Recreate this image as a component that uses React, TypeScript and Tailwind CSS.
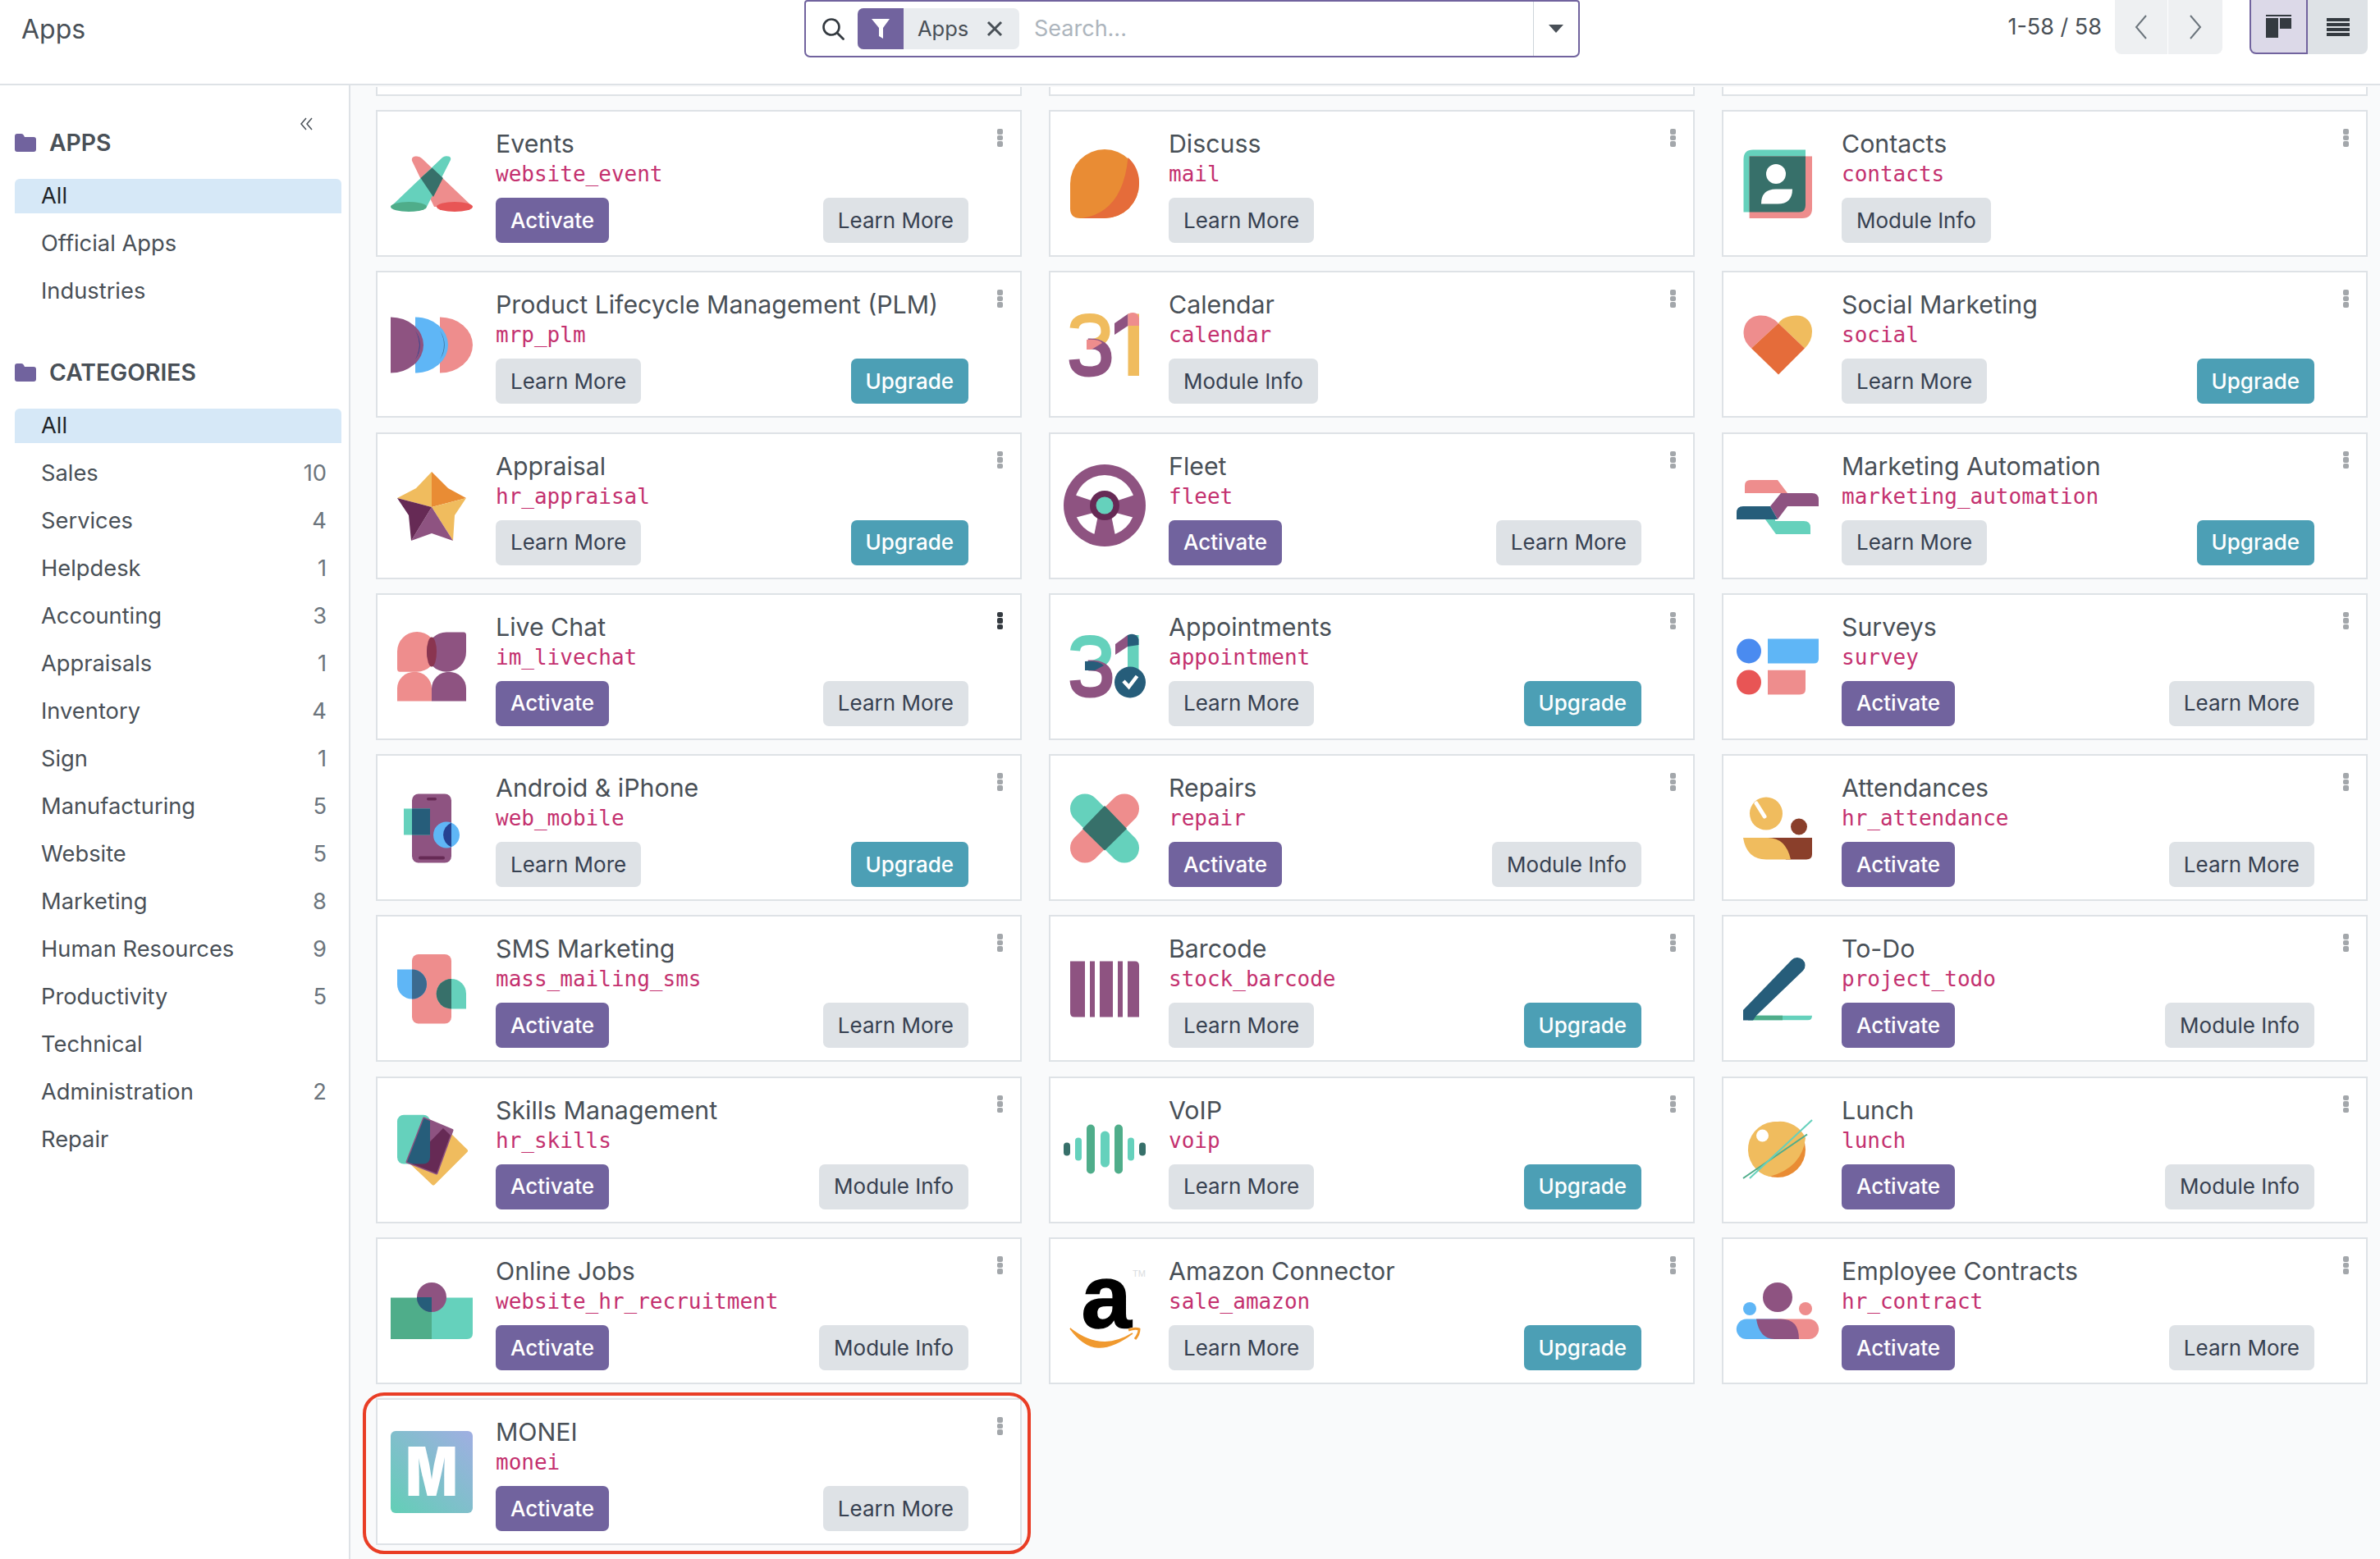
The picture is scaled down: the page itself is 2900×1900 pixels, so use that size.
import React from "react";

const T = "#65d1bc", S = "#ee8d8d", R = "#e85555", P = "#8e5381", DP = "#662a55", B = "#5fb6f6", DB = "#254291", N = "#265d7a", O = "#e98c34", OR = "#e56c3a", Y = "#f0bc5e", G = "#4fad8a", DT = "#37706a", BR = "#8a3f2b";

const Svg = ({ children }: { children: React.ReactNode }) => (
  <svg viewBox="0 0 100 100" className="w-[100px] h-[100px] shrink-0 overflow-visible">{children}</svg>
);

const icons: Record<string, React.ReactNode> = {
  events: (
    <Svg>
      <path d="M26 22 Q25 17 30 16.5 Q35 16 38 19 L100 78 L53 78 Z" fill={S} />
      <path d="M63 18 Q66 15.5 70 16.5 Q74 17 73 21 L44 78 L0 78 Z" fill={T} />
      <polygon points="50.5,30.5 63.8,43 52,66 36.5,43" fill={DT} />
      <ellipse cx="22" cy="78" rx="22" ry="6" fill={G} />
      <ellipse cx="78" cy="78" rx="22" ry="6" fill={R} />
    </Svg>
  ),
  discuss: (
    <Svg>
      <path d="M8 50 A42 42 0 1 1 92 50 A42 42 0 0 1 50 92 H20 Q8 92 8 80 Z" fill={O} />
      <path d="M78.5 18 A42 42 0 0 1 92 50 A42 42 0 0 1 50 92 H22 Q72 85 78.5 18 Z" fill={OR} />
    </Svg>
  ),
  contacts: (
    <Svg>
      <path d="M8.5 84.5 V20 Q8.5 8.5 20 8.5 H84 V84.5 Z" fill={T} />
      <path d="M15.6 16.5 H92 V80 Q92 92 80 92 H15.6 Z" fill={S} />
      <path d="M15.6 16.5 H84 V76 Q84 84.5 76 84.5 H15.6 Z" fill={DT} />
      <circle cx="48" cy="38" r="12" fill="#fff" />
      <path d="M30 74.5 Q30 56.5 48 56.5 H68 Q68 74.5 50 74.5 Z" fill="#fff" />
    </Svg>
  ),
  plm: (
    <Svg>
      <path d="M60 16.5 A40 34 0 0 1 60 84.5 Z" fill={S} />
      <path d="M30 16.5 A40 34 0 0 1 30 84.5 Z" fill={B} />
      <path d="M0 16.5 A40 34 0 0 1 0 84.5 Z" fill={P} />
      <path d="M60 33 A40 34 0 0 1 60 68 Q70 50 60 33 Z" fill="#3b6a8f" />
      <path d="M30 33 A40 34 0 0 1 30 68 Q40 50 30 33 Z" fill={DB} />
    </Svg>
  ),
  calendar: (
    <Svg>
      <path d="M13 30 Q14 17.5 32 17.5 Q51 17.5 51 34 Q51 47 32 49" fill="none" stroke={Y} strokeWidth="11" />
      <path d="M30 49 Q52 48 52 66 Q52 83 31 83 Q14 83 13 68" fill="none" stroke={P} strokeWidth="13" />
      <path d="M28 44 Q43 43 47 48 L34 56 H28 Z" fill={S} />
      <rect x="78.5" y="12.5" width="13.5" height="75.5" fill={Y} />
      <polygon points="62,24 78.5,12.5 78.5,27 62,38" fill={P} />
      <path d="M78.5 12.5 Q90 8 92 18 V27 L78.5 27 Z" fill={S} />
    </Svg>
  ),
  social: (
    <Svg>
      <path d="M51 24 Q42 14.5 30 14.5 C15 14.5 8.5 25 8.5 36 Q8.5 46 18 54.5 Z" fill={S} />
      <path d="M51 24 L83 54.5 Q92 46 92 34 C92 22 84 14.5 73 14.5 C63 14.5 55 18 51 24 Z" fill={Y} />
      <polygon points="51,24 83,54.5 51,86.5 18,54.5" fill={OR} />
    </Svg>
  ),
  appraisal: (
    <Svg>
      <polygon points="50,9 31,29 8,41 50,52" fill={Y} />
      <polygon points="50,9 70,29 92,41 50,52" fill={O} />
      <polygon points="92,41 50,52 76,93 78,62" fill={Y} />
      <polygon points="50,52 76,93 50,84 25,93" fill={P} />
      <polygon points="8,41 50,52 25,93 22,62" fill={DP} />
    </Svg>
  ),
  fleet: (
    <Svg>
      <circle cx="50" cy="50" r="50" fill={P} />
      <circle cx="50" cy="50" r="37" fill="#fff" />
      <polygon points="10,36 40,46 40,58 10,66" fill={P} />
      <polygon points="90,36 60,46 60,58 90,66" fill={P} />
      <polygon points="42,62 58,62 64,92 36,92" fill={P} />
      <circle cx="50" cy="50" r="18" fill={DP} />
      <circle cx="50" cy="50" r="10.5" fill={T} />
    </Svg>
  ),
  automation: (
    <Svg>
      <path d="M10 35 V26 Q10 19 17 19 H50 L62 35 Z" fill={S} />
      <path d="M35 67 H47 V69 H82 Q90 69 90 77 V85 H48 Z" fill={T} />
      <path d="M54 35 H92 Q100 35 100 43 V51 H62 L50 67 L41 51 Z" fill={P} />
      <path d="M0 67 V59 Q0 51 8 51 H41 L50 67 Z" fill={N} />
    </Svg>
  ),
  livechat: (
    <Svg>
      <path d="M8 32 A24 24 0 0 1 56 32 A24 24 0 0 1 32 56.7 H11 Q8 56.7 8 53 Z" fill={S} />
      <path d="M44 32 A24 24 0 0 1 68 8.5 H89 Q92 8.5 92 12 V32 A24 24 0 0 1 68 56.7 A24 24 0 0 1 44 32 Z" fill={P} />
      <ellipse cx="50" cy="32.5" rx="6" ry="18" fill="#8a3550" />
      <path d="M8 92.5 V77 A21 20.3 0 0 1 50 77 V92.5 Z" fill={S} />
      <path d="M50 92.5 V77 A21 20.3 0 0 1 92 77 V92.5 Z" fill={P} />
    </Svg>
  ),
  appointment: (
    <Svg>
      <path d="M14 31 Q15 18 32 18 Q52 18 52 34 Q52 46 33 49" fill="none" stroke={T} strokeWidth="12" />
      <path d="M30 49 Q53 48 53 64 Q53 82 32 82 Q15 82 14 67" fill="none" stroke={P} strokeWidth="13" />
      <path d="M26 44 Q43 43 49 49 L38 55 H26 Z" fill={N} />
      <rect x="78" y="12" width="13.5" height="50" fill={T} />
      <polygon points="63,23 78,12 78,26 63,36" fill={P} />
      <path d="M78 12 Q88 8 91.5 17 V24 L78 26 Z" fill={N} />
      <circle cx="81" cy="69.5" r="19" fill={N} />
      <path d="M73 68 L79.5 75 L89.5 62" fill="none" stroke="#fff" strokeWidth="4.5" />
    </Svg>
  ),
  repair: (
    <Svg>
      <line x1="26" y1="26.5" x2="74" y2="74.5" stroke={T} strokeWidth="36" strokeLinecap="round" />
      <line x1="74" y1="26.5" x2="26" y2="74.5" stroke={S} strokeWidth="36" strokeLinecap="round" />
      <polygon points="50,23 77,51 50,77.5 23,51" fill={DT} />
    </Svg>
  ),
  android: (
    <Svg>
      <rect x="26" y="8.5" width="48" height="84" rx="8" fill={P} />
      <rect x="44" y="13" width="12" height="3.5" rx="1.7" fill={DP} />
      <rect x="34" y="84.5" width="32" height="4" rx="2" fill={DP} />
      <rect x="16" y="26.5" width="32" height="32" fill={T} />
      <rect x="26" y="26.5" width="22" height="32" fill={N} />
      <circle cx="68" cy="58.5" r="16" fill={B} />
      <path d="M74 43.7 V73.3 A16 16 0 0 1 74 43.7 Z" fill={DB} />
    </Svg>
  ),
  survey: (
    <Svg>
      <circle cx="15" cy="31.5" r="15" fill="#4a8bf0" />
      <circle cx="15" cy="69.6" r="15" fill={R} />
      <path d="M38 16.5 H100 V41 Q100 46.5 94 46.5 H38 Z" fill={B} />
      <path d="M38 54.7 H84 V78 Q84 84.5 77 84.5 H38 Z" fill={S} />
    </Svg>
  ),
  attendance: (
    <Svg>
      <circle cx="36" cy="32.5" r="20" fill={Y} />
      <line x1="24" y1="20" x2="34" y2="36" stroke="#fff" strokeWidth="5" strokeLinecap="round" />
      <circle cx="76" cy="48.5" r="10" fill={BR} />
      <path d="M38 62 H92 V82 Q92 88.5 85 88.5 H60 Z" fill={BR} />
      <path d="M8 62 H38 Q60 62 66 88.5 H36 Q12 88 8 62 Z" fill={Y} />
    </Svg>
  ),
  sms: (
    <Svg>
      <rect x="26" y="8" width="48" height="84.5" rx="8" fill={S} />
      <path d="M8 26.5 H26 A18 18 0 0 1 26 62.5 A18 18 0 0 1 8 44.5 Z" fill={B} />
      <path d="M26 26.5 A18 18 0 0 1 26 62.5 Z" fill="#3b6a8f" />
      <path d="M74 38 A18 18 0 0 1 92 56 V74.5 H74 A18 18 0 0 1 74 38 Z" fill={T} />
      <path d="M74 38 A18 18 0 0 0 74 74.5 Z" fill={DT} />
    </Svg>
  ),
  barcode: (
    <Svg>
      <path d="M8 16.5 H26 V84.5 H13 Q8 84.5 8 79 Z" fill={P} />
      <rect x="32" y="16.5" width="6" height="68" fill={P} />
      <rect x="44" y="16.5" width="16" height="68" fill={P} />
      <rect x="66" y="16.5" width="6" height="68" fill={P} />
      <path d="M78 16.5 H87 Q92 16.5 92 22 V84.5 H78 Z" fill={P} />
    </Svg>
  ),
  todo: (
    <Svg>
      <path d="M14 82.7 H92 Q92 88.3 87 88.3 H14 Z" fill={T} />
      <rect x="14" y="82.7" width="42" height="5.6" fill={G} />
      <path d="M8 76 L67 15 A9 9 0 0 1 81 28 L24 82.7 L20 88.5 H8 Z" fill={N} />
    </Svg>
  ),
  skills: (
    <Svg>
      <defs>
        <clipPath id="sk-card"><polygon points="40.5,12 75,26.5 56,79 20,65" /></clipPath>
      </defs>
      <polygon points="92,51.5 52,91.5 24,65 64,24" fill={Y} stroke={Y} strokeWidth="4" strokeLinejoin="round" />
      <rect x="8" y="7.7" width="40" height="59.8" rx="8" fill={T} />
      <polygon points="40.5,12 75,26.5 56,79 20,65" fill={P} stroke={P} strokeWidth="3" strokeLinejoin="round" />
      <g clipPath="url(#sk-card)">
        <polygon points="92,51.5 52,91.5 24,65 64,24" fill={DP} />
        <rect x="8" y="7.7" width="40" height="59.8" rx="8" fill={N} />
      </g>
    </Svg>
  ),
  voip: (
    <Svg>
      <rect x="0" y="41.5" width="8" height="16" rx="4" fill={DT} />
      <rect x="14" y="35.5" width="8" height="28" rx="4" fill={T} />
      <rect x="28" y="19.5" width="10" height="60" rx="5" fill={G} />
      <rect x="45" y="27.5" width="11" height="44" rx="5.5" fill={T} />
      <rect x="62" y="19.5" width="10" height="60" rx="5" fill={G} />
      <rect x="78" y="35.5" width="8" height="28" rx="4" fill={T} />
      <rect x="92" y="41.5" width="8" height="16" rx="4" fill={DT} />
    </Svg>
  ),
  lunch: (
    <Svg>
      <circle cx="50" cy="50" r="34" fill={O} />
      <path d="M50 16 A34 34 0 0 1 84 36 Q80 72 40 83 A34 34 0 0 1 50 16 Z" fill={Y} />
      <circle cx="31.5" cy="33" r="7.5" fill="#fff" />
      <line x1="8" y1="85" x2="86" y2="31.5" stroke={G} strokeWidth="2" />
      <line x1="16" y1="85" x2="92" y2="14" stroke={T} strokeWidth="2" />
    </Svg>
  ),
  jobs: (
    <Svg>
      <rect x="0" y="33.5" width="50" height="50.5" fill={G} />
      <path d="M50 33.5 H100 V77 Q100 84 93 84 H50 Z" fill={T} />
      <circle cx="50" cy="33" r="18" fill={P} />
      <path d="M32 33 H50 V51 A18 18 0 0 1 32 33 Z" fill={N} />
    </Svg>
  ),
  amazon: (
    <Svg>
      <text x="52" y="70" textAnchor="middle" fontFamily="'Liberation Sans',sans-serif" fontWeight="700" fontSize="110" fill="#000" stroke="#000" strokeWidth="1.5">a</text>
      <text x="92" y="8" textAnchor="middle" fontFamily="'Liberation Sans',sans-serif" fontSize="11" fill="#d9dce0">TM</text>
      <path d="M8 71 Q46 101 84 77 Q60 95 42 94 Q24 93 8 71 Z" fill="#f0992e" stroke="#f0992e" strokeWidth="1.5" />
      <path d="M79 73 Q87 70 92 72 Q92 78 87 84" fill="none" stroke="#f0992e" strokeWidth="3" />
    </Svg>
  ),
  contract: (
    <Svg>
      <circle cx="50" cy="33" r="18" fill={P} />
      <circle cx="16" cy="47" r="8" fill={B} />
      <circle cx="84" cy="47" r="8" fill={S} />
      <path d="M12 59.6 H50 V84 H12 A12 12 0 0 1 12 59.6 Z" fill={B} />
      <path d="M50 59.6 H88 A12 12 0 0 1 88 84 H50 Z" fill={S} />
      <path d="M24 59.6 H54 Q76 59.6 76 84 H46 Q28 84 24 59.6 Z" fill={P} />
    </Svg>
  ),
  monei: (
    <Svg>
      <defs>
        <linearGradient id="mon" x1="0" y1="1" x2="1" y2="0">
          <stop offset="0" stopColor="#62cfb6" />
          <stop offset="1" stopColor="#a0aee2" />
        </linearGradient>
      </defs>
      <rect width="100" height="100" rx="6" fill="url(#mon)" />
      <text x="18.5" y="79" fontFamily="Inter,sans-serif" fontWeight="900" fontSize="82" textLength="63" lengthAdjust="spacingAndGlyphs" fill="#fff">M</text>
    </Svg>
  ),
};

type Card = { t: string; m: string; i: string; l: string; r?: string; dark?: boolean };
const A = "Activate", L = "Learn More", M = "Module Info", U = "Upgrade";
const cards: Card[] = [
  { t: "Events", m: "website_event", i: "events", l: A, r: L },
  { t: "Discuss", m: "mail", i: "discuss", l: L },
  { t: "Contacts", m: "contacts", i: "contacts", l: M },
  { t: "Product Lifecycle Management (PLM)", m: "mrp_plm", i: "plm", l: L, r: U },
  { t: "Calendar", m: "calendar", i: "calendar", l: M },
  { t: "Social Marketing", m: "social", i: "social", l: L, r: U },
  { t: "Appraisal", m: "hr_appraisal", i: "appraisal", l: L, r: U },
  { t: "Fleet", m: "fleet", i: "fleet", l: A, r: L },
  { t: "Marketing Automation", m: "marketing_automation", i: "automation", l: L, r: U },
  { t: "Live Chat", m: "im_livechat", i: "livechat", l: A, r: L, dark: true },
  { t: "Appointments", m: "appointment", i: "appointment", l: L, r: U },
  { t: "Surveys", m: "survey", i: "survey", l: A, r: L },
  { t: "Android & iPhone", m: "web_mobile", i: "android", l: L, r: U },
  { t: "Repairs", m: "repair", i: "repair", l: A, r: M },
  { t: "Attendances", m: "hr_attendance", i: "attendance", l: A, r: L },
  { t: "SMS Marketing", m: "mass_mailing_sms", i: "sms", l: A, r: L },
  { t: "Barcode", m: "stock_barcode", i: "barcode", l: L, r: U },
  { t: "To-Do", m: "project_todo", i: "todo", l: A, r: M },
  { t: "Skills Management", m: "hr_skills", i: "skills", l: A, r: M },
  { t: "VoIP", m: "voip", i: "voip", l: L, r: U },
  { t: "Lunch", m: "lunch", i: "lunch", l: A, r: M },
  { t: "Online Jobs", m: "website_hr_recruitment", i: "jobs", l: A, r: M },
  { t: "Amazon Connector", m: "sale_amazon", i: "amazon", l: L, r: U },
  { t: "Employee Contracts", m: "hr_contract", i: "contract", l: A, r: L },
  { t: "MONEI", m: "monei", i: "monei", l: A, r: L },
];

const Btn = ({ k }: { k: string }) => {
  const c = k === A ? "bg-[#71639e] text-white font-medium" : k === U ? "bg-[#4c9fb5] text-white font-medium" : "bg-[#dee2e6] text-[#374151]";
  return <div className={`h-[55px] px-[18px] rounded-[7px] flex items-center text-[26px] leading-none ${c}`}>{k}</div>;
};

const Kebab = ({ dark }: { dark?: boolean }) => (
  <div className="absolute top-[21px] right-[21px] flex flex-col gap-[1px]">
    {[0, 1, 2].map((n) => (
      <div key={n} className={`w-[7px] h-[6.5px] rounded-[2px] ${dark ? "bg-[#343a40]" : "bg-[#a3a7ab]"}`} />
    ))}
  </div>
);

const CardView = ({ c }: { c: Card }) => (
  <div className="relative h-[179px] bg-white border-2 border-[#dee2e6] flex items-center pl-[16px] pr-[63px]">
    {icons[c.i]}
    <div className="ml-[28px] flex-1 min-w-0 self-stretch flex flex-col pt-[20px]">
      <div className="text-[30.3px] leading-[38px] text-[#495057] whitespace-nowrap">{c.t}</div>
      <div className="font-['DejaVu_Sans_Mono',monospace] text-[26px] leading-[36px] text-[#c4316f]">{c.m}</div>
      <div className="flex justify-between mt-[11px]">
        <Btn k={c.l} />
        {c.r && <Btn k={c.r} />}
      </div>
    </div>
    <Kebab dark={c.dark} />
    {c.t === "MONEI" && (
      <div className="absolute -left-[18px] -top-[9px] w-[814px] h-[197px] border-[4px] border-[#e93d25] rounded-[26px] pointer-events-none" />
    )}
  </div>
);

const Folder = () => (
  <svg viewBox="0 0 26 22" className="w-[26px] h-[22px] shrink-0">
    <path d="M0 3 Q0 0 3 0 H8 Q10 0 11 2 L12 4 H23 Q26 4 26 7 V19 Q26 22 23 22 H3 Q0 22 0 19 Z" fill="#71639e" />
  </svg>
);

const Head = ({ label }: { label: string }) => (
  <div className="h-[40px] flex items-center gap-[16px] pl-[18px]">
    <Folder />
    <span className="text-[28.3px] font-semibold text-[#495057]">{label}</span>
  </div>
);

const Item = ({ label, n, active }: { label: string; n?: number; active?: boolean }) => (
  <div className={`h-[42px] ml-[18px] mr-[9px] pl-[32px] pr-[18px] flex items-center justify-between text-[27.3px] leading-none ${active ? "bg-[#d6e8f7] rounded-t-[6px] text-[#212529]" : "text-[#495057]"}`}>
    <span>{label}</span>
    {n !== undefined && <span className="text-[#6c757d]">{n}</span>}
  </div>
);

const cats: [string, number?][] = [
  ["Sales", 10], ["Services", 4], ["Helpdesk", 1], ["Accounting", 3], ["Appraisals", 1], ["Inventory", 4], ["Sign", 1],
  ["Manufacturing", 5], ["Website", 5], ["Marketing", 8], ["Human Resources", 9], ["Productivity", 5], ["Technical"], ["Administration", 2], ["Repair"],
];

export default function App() {
  return (
    <div className="w-[2900px] h-[1900px] overflow-hidden bg-white font-['Inter',sans-serif] flex flex-col">
      <header className="h-[104px] shrink-0 border-b-2 border-[#dee2e6] flex items-start relative">
        <div className="w-[980px] pl-[26px] pt-[15px] text-[32px] leading-[42px] text-[#495057]">Apps</div>
        <div className="w-[945px] h-[70px] border-2 border-[#71639e] rounded-b-[7px] rounded-t-[4px] flex items-center">
          <svg viewBox="0 0 28 28" className="w-[28px] h-[28px] ml-[19px] shrink-0">
            <circle cx="12" cy="12" r="9.5" fill="none" stroke="#343a40" strokeWidth="2.6" />
            <line x1="19" y1="19" x2="26.5" y2="26.5" stroke="#343a40" strokeWidth="2.8" strokeLinecap="round" />
          </svg>
          <div className="ml-[16px] h-[50px] w-[197px] rounded-[7px] bg-[#e9ecef] flex items-center overflow-hidden shrink-0">
            <div className="w-[56px] h-full bg-[#71639e] flex items-center justify-center">
              <svg viewBox="0 0 24 28" className="w-[24px] h-[28px]">
                <path d="M1 2 H23 L15 13 V26 L10 23 V13 Z" fill="#fff" />
              </svg>
            </div>
            <span className="ml-[17px] w-[62px] text-[25.5px] text-[#495057]">Apps</span>
            <svg viewBox="0 0 20 20" className="w-[20px] h-[20px] ml-[22px]">
              <path d="M2 2 L18 18 M18 2 L2 18" stroke="#495057" strokeWidth="3" />
            </svg>
          </div>
          <span className="ml-[18px] text-[27px] text-[#adb5bd] flex-1">Search...</span>
          <div className="w-[55px] h-full border-l border-[#ced4da] flex items-center justify-center">
            <svg viewBox="0 0 18 10" className="w-[18px] h-[10px]"><polygon points="0,0 18,0 9,10" fill="#495057" /></svg>
          </div>
        </div>
        <div className="w-[636px] h-[66px] flex items-center justify-end text-[27px] text-[#495057]">1-58 / 58</div>
        <div className="ml-[16px] w-[131px] h-[66px] bg-[#eef0f2] rounded-b-[8px] flex">
          <div className="w-[65px] border-r border-white flex items-center justify-center">
            <svg viewBox="0 0 16 30" className="w-[16px] h-[30px]"><path d="M14 1 L2 15 L14 29" fill="none" stroke="#6c757d" strokeWidth="2" /></svg>
          </div>
          <div className="flex-1 flex items-center justify-center">
            <svg viewBox="0 0 16 30" className="w-[16px] h-[30px]"><path d="M2 1 L14 15 L2 29" fill="none" stroke="#6c757d" strokeWidth="2" /></svg>
          </div>
        </div>
        <div className="ml-[33px] w-[144px] h-[66px] flex">
          <div className="w-[71px] bg-[#dcd9e8] border-2 border-t-0 border-[#71639e] rounded-bl-[8px] flex items-center justify-center">
            <svg viewBox="0 0 31 28" className="w-[31px] h-[28px]">
              <rect x="0" y="0" width="31" height="2" fill="#343a40" />
              <rect x="0" y="4" width="15" height="24" fill="#343a40" />
              <rect x="17" y="4" width="14" height="13" fill="#343a40" />
            </svg>
          </div>
          <div className="flex-1 bg-[#dee2e6] rounded-br-[8px] flex items-center justify-center">
            <svg viewBox="0 0 28 22" className="w-[28px] h-[22px]">
              <rect y="0" width="28" height="4" fill="#343a40" />
              <rect y="6" width="28" height="4" fill="#343a40" />
              <rect y="12" width="28" height="4" fill="#343a40" />
              <rect y="18" width="28" height="4" fill="#343a40" />
            </svg>
          </div>
        </div>
      </header>
      <div className="flex-1 flex min-h-0">
        <aside className="relative w-[427px] shrink-0 border-r-2 border-[#dee2e6] pt-[50px]">
          <svg viewBox="0 0 16 16" className="absolute top-[39px] left-[366px] w-[16px] h-[16px]">
            <path d="M7 1 L1 8 L7 15 M14 1 L8 8 L14 15" fill="none" stroke="#495057" strokeWidth="1.5" />
          </svg>
          <Head label="APPS" />
          <div className="mt-[24px] flex flex-col gap-[16px]">
            <Item label="All" active />
            <Item label="Official Apps" />
            <Item label="Industries" />
          </div>
          <div className="mt-[58px]"><Head label="CATEGORIES" /></div>
          <div className="mt-[24px] flex flex-col gap-[16px]">
            <Item label="All" active />
            {cats.map(([l, n]) => <Item key={l} label={l} n={n} />)}
          </div>
        </aside>
        <main className="flex-1 bg-[#f9fafb] pl-[31px] pr-[15px] pt-[2px] overflow-hidden">
          <div className="grid grid-cols-3 gap-x-[33px]">
            {[0, 1, 2].map((n) => (
              <div key={n} className="h-[11px] bg-white border-2 border-t-0 border-[#dee2e6]" />
            ))}
          </div>
          <div className="mt-[17px] grid grid-cols-3 gap-x-[33px] gap-y-[17.3px]">
            {cards.map((c) => <CardView key={c.i} c={c} />)}
          </div>
        </main>
      </div>
    </div>
  );
}
